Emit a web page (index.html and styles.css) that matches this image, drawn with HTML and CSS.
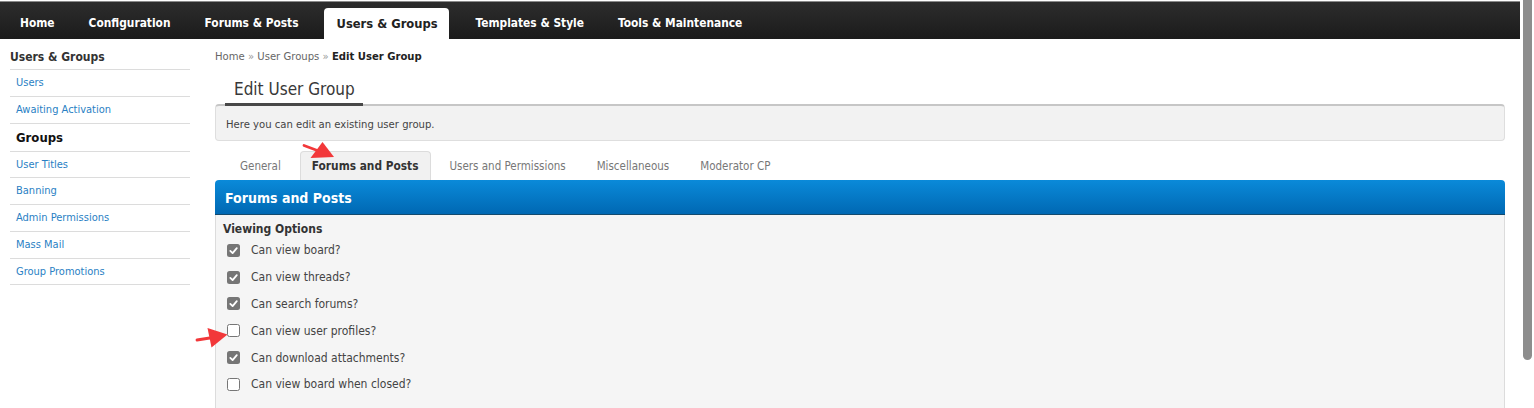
FILE: index.html
```html
<!DOCTYPE html>
<html>
<head>
<meta charset="utf-8">
<title>Edit User Group</title>
<link rel="stylesheet" href="styles.css">
</head>
<body>
<div class="screen">
  <div class="page">
    <div class="topbar">
      <nav class="nav">
        <a class="nav-item">Home</a>
        <a class="nav-item">Configuration</a>
        <a class="nav-item">Forums &amp; Posts</a>
        <a class="nav-item active">Users &amp; Groups</a>
        <a class="nav-item">Templates &amp; Style</a>
        <a class="nav-item">Tools &amp; Maintenance</a>
      </nav>
    </div>
    <div class="layout">
      <aside class="sidebar">
        <div class="side-title">Users &amp; Groups</div>
        <ul class="side-list">
          <li><a>Users</a></li>
          <li><a>Awaiting Activation</a></li>
          <li class="current"><a>Groups</a></li>
          <li><a>User Titles</a></li>
          <li><a>Banning</a></li>
          <li><a>Admin Permissions</a></li>
          <li><a>Mass Mail</a></li>
          <li><a>Group Promotions</a></li>
        </ul>
      </aside>
      <main class="main">
        <div class="breadcrumb"><a>Home</a> <span class="sep">»</span> <a>User Groups</a> <span class="sep">»</span> <b>Edit User Group</b></div>
        <h1 class="page-title">Edit User Group</h1>
        <div class="desc">Here you can edit an existing user group.</div>
        <div class="tabs">
          <a class="tab">General</a>
          <a class="tab active">Forums and Posts</a>
          <a class="tab">Users and Permissions</a>
          <a class="tab">Miscellaneous</a>
          <a class="tab">Moderator CP</a>
        </div>
        <div class="panel">
          <div class="panel-head">Forums and Posts</div>
          <div class="panel-body">
            <div class="group-title">Viewing Options</div>
            <label class="opt"><span class="cb on"><svg viewBox="0 0 13 13"><path d="M3.3 6.9 L5.6 9.1 L9.8 4.1"/></svg></span>Can view board?</label>
            <label class="opt"><span class="cb on"><svg viewBox="0 0 13 13"><path d="M3.3 6.9 L5.6 9.1 L9.8 4.1"/></svg></span>Can view threads?</label>
            <label class="opt"><span class="cb on"><svg viewBox="0 0 13 13"><path d="M3.3 6.9 L5.6 9.1 L9.8 4.1"/></svg></span>Can search forums?</label>
            <label class="opt"><span class="cb"></span>Can view user profiles?</label>
            <label class="opt"><span class="cb on"><svg viewBox="0 0 13 13"><path d="M3.3 6.9 L5.6 9.1 L9.8 4.1"/></svg></span>Can download attachments?</label>
            <label class="opt"><span class="cb"></span>Can view board when closed?</label>
          </div>
        </div>
      </main>
    </div>
    <svg class="annot" viewBox="0 0 1520 408" width="1520" height="408">
      <line x1="304" y1="145.5" x2="320" y2="151.5" class="arrow-line"/>
      <polygon points="334,157 322.5,142 310.5,158" class="arrow-head"/>
      <line x1="197" y1="340" x2="213" y2="337.5" class="arrow-line"/>
      <polygon points="227.5,334.5 207.5,328 211.5,347.5" class="arrow-head"/>
    </svg>
  </div>
  <div class="scrollbar"><div class="thumb"></div></div>
</div>
</body>
</html>
```

FILE: styles.css
```css
* { box-sizing: border-box; }
html, body { margin: 0; padding: 0; }
body {
  background: #fff;
  font-family: "DejaVu Sans Condensed", "DejaVu Sans", "Liberation Sans", sans-serif;
  overflow: hidden;
}
a { text-decoration: none; cursor: pointer; }

.screen { display: flex; height: 408px; }
.page { flex: 0 0 1520px; position: relative; padding-top: 1px; }
.scrollbar { flex: 1; padding-left: 3px; background: #fff; }
.thumb { width: 9px; height: 360px; background: #8d8d8d; border-radius: 0 0 5px 5px; }

/* top navigation */
.topbar {
  height: 38px;
  border-top: 1px solid #8a8a8a;
  background: linear-gradient(#2d2d2d, #1b1b1b);
  display: flex;
  align-items: flex-end;
  padding-left: 3px;
}
.nav { display: flex; align-items: flex-end; }
.nav-item {
  display: block;
  line-height: 31px;
  padding: 0 17px;
  color: #fff;
  font-weight: bold;
  font-size: 11.85px;
  white-space: nowrap;
}
.nav-item.active {
  background: #fff;
  color: #222;
  font-size: 12.8px;
  border-radius: 4px 4px 0 0;
  padding: 0 11px 0 13px;
  margin: 0 10px 0 8px;
}

/* layout */
.layout { display: flex; padding: 0 15px 0 10px; gap: 25px; }

.sidebar { width: 180px; flex: none; padding-top: 10px; }
.side-title {
  font-size: 12px;
  font-weight: bold;
  color: #333;
  line-height: 16px;
  padding-bottom: 4px;
  border-bottom: 1px solid #dcdcdc;
}
.side-list { list-style: none; margin: 0; padding: 0; }
.side-list li {
  border-bottom: 1px solid #dcdcdc;
  padding-left: 6px;
  line-height: 25.75px;
  font-size: 11px;
}
.side-list a { color: #2a7fc4; }
.side-list li.current { line-height: 27px; font-size: 13px; font-weight: bold; }
.side-list li.current a { color: #111; }

.main { flex: 1; min-width: 0; padding-top: 10px; }
.breadcrumb { font-size: 11.2px; line-height: 16px; color: #666; }
.breadcrumb a { color: #666; }
.breadcrumb .sep { color: #999; }
.breadcrumb b { color: #222; }

.page-title {
  position: relative;
  margin: 13px 0 0 10px;
  width: fit-content;
  font-size: 17px;
  font-weight: normal;
  color: #383838;
  line-height: 22px;
  padding: 0 8px 3px 9px;
  border-bottom: 3px solid #484848;
}
.desc {
  margin-top: -2px;
  background: #f2f2f2;
  border: 1px solid #dedede;
  border-top: 2px solid #c6c6c6;
  border-radius: 4px;
  padding: 11px 10px 7px;
  font-size: 11.2px;
  line-height: 16px;
  color: #444;
}

.tabs { display: flex; gap: 7px; padding-left: 13px; margin-top: 10px; }
.tab {
  display: block;
  line-height: 28px;
  padding: 0 11px;
  font-size: 11.5px;
  color: #777;
  border: 1px solid transparent;
  border-bottom: none;
  border-radius: 4px 4px 0 0;
  white-space: nowrap;
}
.tab.active { background: #f1f1f1; border-color: #dcdcdc; color: #333; font-weight: bold; font-size: 11.8px; }

.panel-head {
  background: linear-gradient(#0a8ad9, #0068b3);
  border-bottom: 1px solid #134a6e;
  border-radius: 4px 4px 0 0;
  color: #fff;
  font-weight: bold;
  font-size: 14px;
  line-height: 32px;
  padding: 2px 0 0 10px;
}
.panel-body {
  background: #f5f5f5;
  border: 1px solid #dcdcdc;
  border-top: none;
  padding: 6px 7px 30px;
}
.group-title { font-size: 12px; font-weight: bold; color: #333; line-height: 16px; }
.opt {
  display: flex;
  align-items: center;
  height: 26.8px;
  padding-left: 4px;
  gap: 11px;
  font-size: 12px;
  color: #444;
}
.cb {
  flex: none;
  width: 13px;
  height: 13px;
  border-radius: 2.5px;
  border: 1px solid #767676;
  background: #fff;
  display: block;
}
.cb.on { background: #767676; border: none; }
.cb svg { display: block; width: 13px; height: 13px; }
.cb svg path { fill: none; stroke: #fff; stroke-width: 1.8; stroke-linecap: round; stroke-linejoin: round; }

/* annotation arrows drawn over the screenshot */
.annot { position: absolute; left: 0; top: 0; pointer-events: none; }
.arrow-line { stroke: #f2383a; stroke-width: 2.8; stroke-linecap: round; }
.arrow-head { fill: #f2383a; }
```
